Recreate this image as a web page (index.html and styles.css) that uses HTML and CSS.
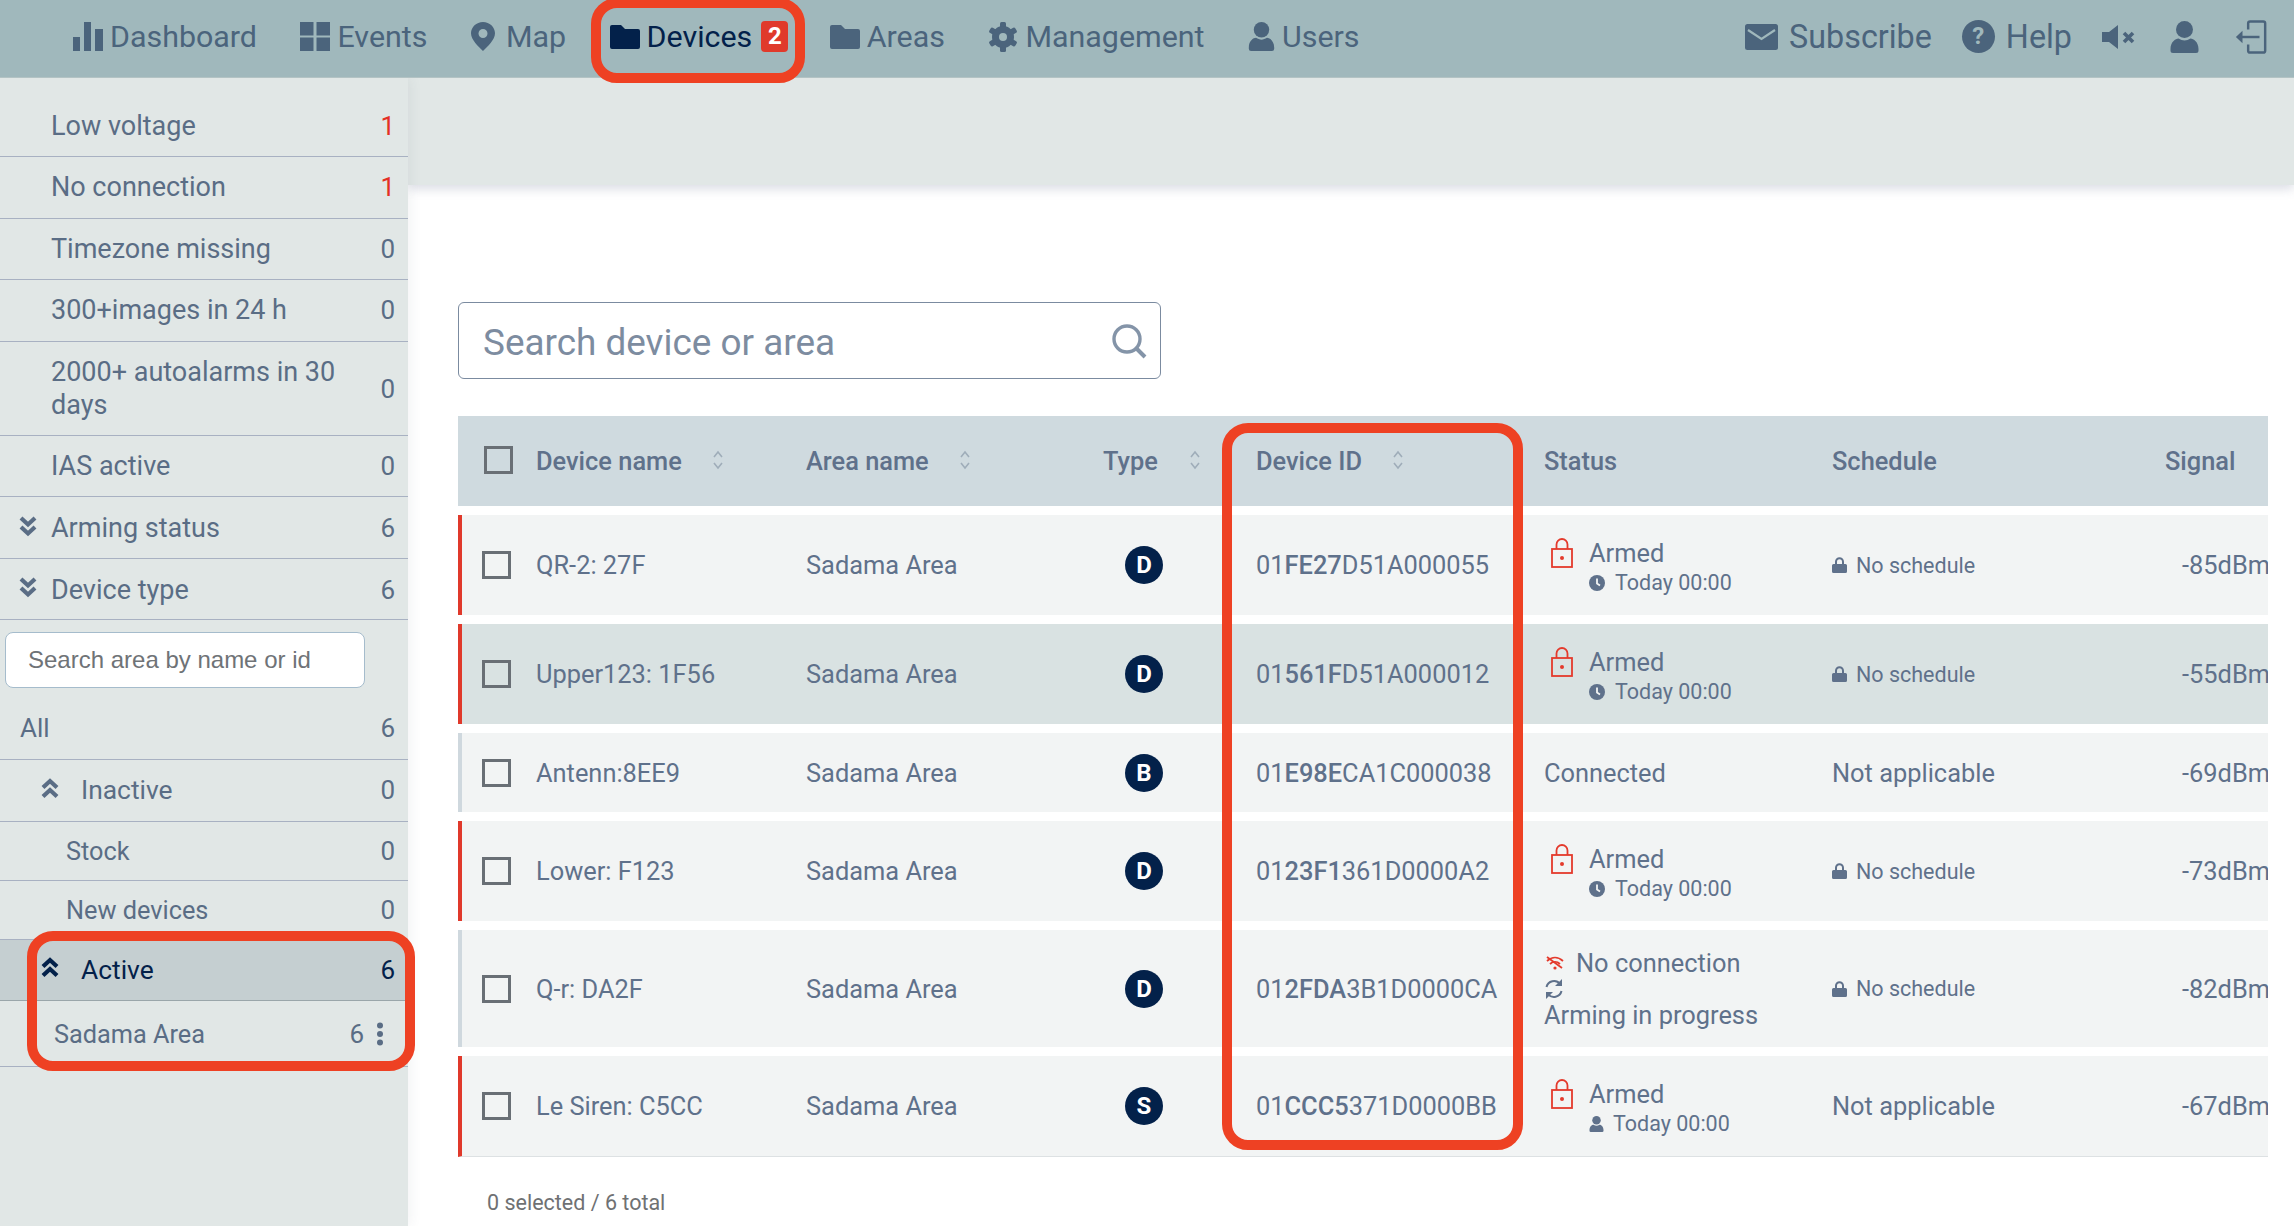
FILE: index.html
```html
<!DOCTYPE html>
<html lang="en">
<head>
<meta charset="utf-8">
<title>Devices</title>
<link rel="stylesheet" href="styles.css">
</head>
<body>
<svg class="defs" width="0" height="0" aria-hidden="true">
  <symbol id="i-folder" viewBox="0 0 30 24"><path d="M2 0h9l4 4h13a2 2 0 0 1 2 2v16a2 2 0 0 1-2 2H2a2 2 0 0 1-2-2V2a2 2 0 0 1 2-2z"/></symbol>
  <symbol id="i-user" viewBox="0 0 28 32"><circle cx="14" cy="8.5" r="8.5"/><path d="M0 28c0-7 5-10.500 8-10.500 2 1.300 4 2 6 2s4-.7 6-2c3 0 8 3.500 8 10.500v1.500a2.500 2.500 0 0 1-2.500 2.500h-23A2.500 2.500 0 0 1 0 29.500z"/></symbol>
  <symbol id="i-lock-red" viewBox="0 0 22 30"><g fill="none" stroke="#e43a2c" stroke-width="1.800"><rect x="1" y="11" width="20" height="18"/><path d="M5.500 11V6.500a5.500 5.500 0 0 1 11 0V11"/></g><circle cx="11" cy="20" r="2" fill="#e43a2c"/></symbol>
  <symbol id="i-lock" viewBox="0 0 15 16"><path fill="#5f718b" d="M3 7V4.800a4.500 4.500 0 0 1 9 0V7h1.500A1.500 1.500 0 0 1 15 8.500v6a1.500 1.500 0 0 1-1.500 1.500h-12A1.500 1.500 0 0 1 0 14.500v-6A1.500 1.500 0 0 1 1.500 7zm2 0h5V4.800a2.500 2.500 0 0 0-5 0z"/></symbol>
  <symbol id="i-clock" viewBox="0 0 16 16"><circle cx="8" cy="8" r="8" fill="#5f718b"/><path d="M8 3.500V8.500l3 2" fill="none" stroke="#f2f4f4" stroke-width="1.800"/></symbol>
  <symbol id="i-sort" viewBox="0 0 10 20"><path d="M1 7l4-5 4 5M1 13l4 5 4-5" fill="none" stroke="#9fadb9" stroke-width="1.600"/></symbol>
  <symbol id="i-chev-down" viewBox="0 0 18 21"><path d="M2 2l7 6.500 7-6.500M2 11l7 6.500 7-6.500" fill="none" stroke="currentColor" stroke-width="4.200"/></symbol>
  <symbol id="i-chev-up" viewBox="0 0 18 21"><path d="M2 9.500l7-6.500 7 6.500M2 18.500l7-6.500 7 6.500" fill="none" stroke="currentColor" stroke-width="4.200"/></symbol>
</svg>

<nav class="topnav">
  <div class="nav-group">
    <a class="nav-item">
      <svg class="ico ico-bars" viewBox="0 0 30 29"><rect x="0" y="15" width="7" height="14"/><rect x="11" y="0" width="7" height="29"/><rect x="22" y="7" width="8" height="22"/></svg>
      <span>Dashboard</span>
    </a>
    <a class="nav-item">
      <svg class="ico ico-grid" viewBox="0 0 30 29"><rect width="13.500" height="13.500"/><rect x="16.500" width="13.500" height="13.500"/><rect y="15.500" width="13.500" height="13.500"/><rect x="16.500" y="15.500" width="13.500" height="13.500"/></svg>
      <span>Events</span>
    </a>
    <a class="nav-item">
      <svg class="ico ico-pin" viewBox="0 0 24 29"><path fill-rule="evenodd" d="M12 0c6.600 0 12 5 12 11.300 0 6.500-7.500 13.500-12 17.700C7.500 24.800 0 17.800 0 11.300 0 5 5.400 0 12 0zm0 7a4.500 4.500 0 1 0 0 9 4.500 4.500 0 0 0 0-9z"/></svg>
      <span>Map</span>
    </a>
    <a class="nav-item nav-active">
      <svg class="ico ico-folder"><use href="#i-folder"/></svg>
      <span>Devices</span>
      <span class="badge">2</span>
    </a>
    <a class="nav-item">
      <svg class="ico ico-folder"><use href="#i-folder"/></svg>
      <span>Areas</span>
    </a>
    <a class="nav-item">
      <svg class="ico ico-gear" viewBox="0 0 30 30">
        <g><rect x="12" y="0" width="6" height="30" rx="1.500"/><rect x="12" y="0" width="6" height="30" rx="1.500" transform="rotate(60 15 15)"/><rect x="12" y="0" width="6" height="30" rx="1.500" transform="rotate(120 15 15)"/></g>
        <circle cx="15" cy="15" r="7.500" fill="none" stroke="currentColor" stroke-width="7"/>
        <circle cx="15" cy="15" r="4" fill="#a0b8bc"/>
      </svg>
      <span>Management</span>
    </a>
    <a class="nav-item">
      <svg class="ico ico-user"><use href="#i-user"/></svg>
      <span>Users</span>
    </a>
  </div>
  <div class="nav-group nav-right">
    <a class="nav-item">
      <svg class="ico ico-mail" viewBox="0 0 33 26"><rect width="33" height="26" rx="2.500"/><path d="M3 6l13.500 9L30 6" fill="none" stroke="#a0b8bc" stroke-width="2.200"/></svg>
      <span>Subscribe</span>
    </a>
    <a class="nav-item">
      <span class="help-ico">?</span>
      <span>Help</span>
    </a>
    <a class="nav-item">
      <svg class="ico ico-sound" viewBox="0 0 33 24"><path d="M0 7h7l9-7v24l-9-7H0z"/><path d="M22 8l9 9M31 8l-9 9" stroke="currentColor" stroke-width="3.600" fill="none"/></svg>
    </a>
    <a class="nav-item">
      <svg class="ico ico-user2"><use href="#i-user"/></svg>
    </a>
    <a class="nav-item">
      <svg class="ico ico-logout" viewBox="0 0 32 36"><path d="M13 10V3.500A2 2 0 0 1 15 1.500h14a2 2 0 0 1 2 2v29a2 2 0 0 1-2 2H15a2 2 0 0 1-2-2V26" fill="none" stroke="currentColor" stroke-width="2.600"/><path d="M25 18H4" stroke="currentColor" stroke-width="2.600"/><path d="M0 18l7-6.500v13z"/></svg>
    </a>
  </div>
</nav>

<div class="layout">
  <aside class="sidebar">
    <div class="side-row h-std"><span class="lbl">Low voltage</span><span class="cnt cnt-red">1</span></div>
    <div class="side-row h-std"><span class="lbl">No connection</span><span class="cnt cnt-red">1</span></div>
    <div class="side-row h-std"><span class="lbl">Timezone missing</span><span class="cnt">0</span></div>
    <div class="side-row h-std"><span class="lbl">300+images in 24 h</span><span class="cnt">0</span></div>
    <div class="side-row h-tall"><span class="lbl lbl-wrap">2000+ autoalarms in 30 days</span><span class="cnt">0</span></div>
    <div class="side-row h-std"><span class="lbl">IAS active</span><span class="cnt">0</span></div>
    <div class="side-row h-std chev-row"><svg class="chev"><use href="#i-chev-down"/></svg><span class="lbl">Arming status</span><span class="cnt">6</span></div>
    <div class="side-row h-std chev-row"><svg class="chev"><use href="#i-chev-down"/></svg><span class="lbl">Device type</span><span class="cnt">6</span></div>
    <div class="area-search"><input class="area-input" placeholder="Search area by name or id"></div>
    <div class="side-row row-all"><span class="lbl">All</span><span class="cnt">6</span></div>
    <div class="side-row h-std sub-head"><svg class="chev"><use href="#i-chev-up"/></svg><span class="lbl">Inactive</span><span class="cnt">0</span></div>
    <div class="side-row h-sub sub-item"><span class="lbl">Stock</span><span class="cnt">0</span></div>
    <div class="side-row h-sub sub-item"><span class="lbl">New devices</span><span class="cnt">0</span></div>
    <div class="side-row h-std sub-head row-active"><svg class="chev"><use href="#i-chev-up"/></svg><span class="lbl">Active</span><span class="cnt">6</span></div>
    <div class="side-row area-row">
      <span class="lbl">Sadama Area</span><span class="cnt">6</span>
      <svg class="dots" viewBox="0 0 8 24"><circle cx="4" cy="3.500" r="3"/><circle cx="4" cy="12" r="3"/><circle cx="4" cy="20.500" r="3"/></svg>
    </div>
  </aside>

  <main class="main">
    <div class="subbar"></div>
    <div class="content">
      <div class="device-search">
        <span class="search-text">Search device or area</span>
        <svg class="search-ico" viewBox="0 0 36 36"><circle cx="16" cy="16" r="13" fill="none" stroke="#8494a8" stroke-width="3.400"/><path d="M25 25l9 9" stroke="#8494a8" stroke-width="4"/></svg>
      </div>

      <div class="tbl">
        <div class="tr thead">
          <div class="cell cell-check"><span class="cb cb-head"></span></div>
          <div class="cell">Device name<svg class="sort sort-name"><use href="#i-sort"/></svg></div>
          <div class="cell">Area name<svg class="sort sort-area"><use href="#i-sort"/></svg></div>
          <div class="cell">Type<svg class="sort sort-type"><use href="#i-sort"/></svg></div>
          <div class="cell">Device ID<svg class="sort sort-id"><use href="#i-sort"/></svg></div>
          <div class="cell">Status</div>
          <div class="cell">Schedule</div>
          <div class="cell">Signal</div>
        </div>

        <div class="tr row alarm">
          <div class="cell cell-check"><span class="cb"></span></div>
          <div class="cell">QR-2: 27F</div>
          <div class="cell">Sadama Area</div>
          <div class="cell"><span class="type">D</span></div>
          <div class="cell">01<b>FE27</b>D51A000055</div>
          <div class="cell armed">
            <svg class="lock-red"><use href="#i-lock-red"/></svg>
            <div class="armed-text"><div class="armed-title">Armed</div><div class="armed-sub"><svg class="sub-ico"><use href="#i-clock"/></svg>Today 00:00</div></div>
          </div>
          <div class="cell sched"><svg class="sched-lock"><use href="#i-lock"/></svg>No schedule</div>
          <div class="cell signal">-85dBm</div>
        </div>

        <div class="tr row alarm row-dark">
          <div class="cell cell-check"><span class="cb"></span></div>
          <div class="cell">Upper123: 1F56</div>
          <div class="cell">Sadama Area</div>
          <div class="cell"><span class="type">D</span></div>
          <div class="cell">01<b>561F</b>D51A000012</div>
          <div class="cell armed">
            <svg class="lock-red"><use href="#i-lock-red"/></svg>
            <div class="armed-text"><div class="armed-title">Armed</div><div class="armed-sub"><svg class="sub-ico"><use href="#i-clock"/></svg>Today 00:00</div></div>
          </div>
          <div class="cell sched"><svg class="sched-lock"><use href="#i-lock"/></svg>No schedule</div>
          <div class="cell signal">-55dBm</div>
        </div>

        <div class="tr row row-short">
          <div class="cell cell-check"><span class="cb"></span></div>
          <div class="cell">Antenn:8EE9</div>
          <div class="cell">Sadama Area</div>
          <div class="cell"><span class="type">B</span></div>
          <div class="cell">01<b>E98E</b>CA1C000038</div>
          <div class="cell">Connected</div>
          <div class="cell">Not applicable</div>
          <div class="cell signal">-69dBm</div>
        </div>

        <div class="tr row alarm">
          <div class="cell cell-check"><span class="cb"></span></div>
          <div class="cell">Lower: F123</div>
          <div class="cell">Sadama Area</div>
          <div class="cell"><span class="type">D</span></div>
          <div class="cell">01<b>23F1</b>361D0000A2</div>
          <div class="cell armed">
            <svg class="lock-red"><use href="#i-lock-red"/></svg>
            <div class="armed-text"><div class="armed-title">Armed</div><div class="armed-sub"><svg class="sub-ico"><use href="#i-clock"/></svg>Today 00:00</div></div>
          </div>
          <div class="cell sched"><svg class="sched-lock"><use href="#i-lock"/></svg>No schedule</div>
          <div class="cell signal">-73dBm</div>
        </div>

        <div class="tr row row-tall">
          <div class="cell cell-check"><span class="cb"></span></div>
          <div class="cell">Q-r: DA2F</div>
          <div class="cell">Sadama Area</div>
          <div class="cell"><span class="type">D</span></div>
          <div class="cell">01<b>2FDA</b>3B1D0000CA</div>
          <div class="cell progress">
            <div class="noconn">
              <svg class="wifi-off" viewBox="0 0 18 14"><g fill="none" stroke="#e43a2c" stroke-width="1.800"><path d="M1 5c5-4.500 11-4.500 16 0M4 8c3-2.800 7-2.800 10 0"/><path d="M1 1l15 11"/></g><circle cx="9" cy="12" r="1.600" fill="#e43a2c"/></svg>
              <span>No connection</span>
            </div>
            <svg class="sync" viewBox="0 0 20 20"><g fill="none" stroke="#5f718b" stroke-width="2"><path d="M2.500 8A7.700 7.700 0 0 1 16 5"/><path d="M17.500 12A7.700 7.700 0 0 1 4 15"/></g><path fill="#5f718b" d="M18 0v7h-7zM2 20v-7h7z"/></svg>
            <div class="progress-text">Arming in progress</div>
          </div>
          <div class="cell sched"><svg class="sched-lock"><use href="#i-lock"/></svg>No schedule</div>
          <div class="cell signal">-82dBm</div>
        </div>

        <div class="tr row alarm row-last">
          <div class="cell cell-check"><span class="cb"></span></div>
          <div class="cell">Le Siren: C5CC</div>
          <div class="cell">Sadama Area</div>
          <div class="cell"><span class="type">S</span></div>
          <div class="cell">01<b>CCC5</b>371D0000BB</div>
          <div class="cell armed">
            <svg class="lock-red"><use href="#i-lock-red"/></svg>
            <div class="armed-text"><div class="armed-title">Armed</div><div class="armed-sub"><svg class="sub-ico sub-user"><use href="#i-user"/></svg>Today 00:00</div></div>
          </div>
          <div class="cell">Not applicable</div>
          <div class="cell signal">-67dBm</div>
        </div>
      </div>

      <div class="total">0 selected / 6 total</div>
    </div>
  </main>
</div>

<div class="mark mark-devices"></div>
<div class="mark mark-active"></div>
<div class="mark mark-id"></div>
</body>
</html>
```

FILE: styles.css
```css
* { box-sizing: border-box; }
html, body { margin: 0; padding: 0; height: 100%; }
body {
  position: relative;
  width: 2294px;
  height: 1226px;
  overflow: hidden;
  background: #fff;
  font-family: Roboto, "Liberation Sans", sans-serif;
  color: #5f718b;
}
.defs { position: absolute; }

/* Top navigation */
.topnav {
  height: 78px;
  background: #a0b8bc;
  border-bottom: 1px solid #b3c3c4;
  display: flex;
  justify-content: space-between;
  align-items: flex-start;
  padding: 0 27px 0 73px;
  position: relative;
  z-index: 3;
  color: #4b647c;
  font-size: 30.400px;
}
.nav-group { display: flex; gap: 43.500px; height: 77px; align-items: center; padding-bottom: 4px; }
.nav-right { gap: 30px; font-size: 32.300px; }
.nav-item { display: flex; align-items: center; gap: 7px; white-space: nowrap; }
.nav-right .nav-item { gap: 11px; }
.nav-active { color: #03214a; margin-right: -2px; }
.ico { fill: currentColor; flex: none; display: block; }
.ico-bars, .ico-grid { width: 30px; height: 29px; }
.ico-pin { width: 24px; height: 29px; margin-right: 4px; }
.ico-folder { width: 30px; height: 24px; }
.ico-gear { width: 30px; height: 30px; }
.ico-user { width: 27px; height: 29px; }
.ico-user2 { width: 29px; height: 32px; margin-left: 5px; }
.ico-mail { width: 33px; height: 26px; }
.ico-sound { width: 33px; height: 24px; }
.ico-logout { width: 32px; height: 34px; margin-left: 6px; }
.help-ico {
  width: 33px;
  height: 33px;
  border-radius: 50%;
  background: #4b647c;
  color: #a0b8bc;
  font-size: 24px;
  font-weight: 700;
  line-height: 33px;
  text-align: center;
}
.badge {
  width: 27px;
  height: 31px;
  margin-left: 2px;
  border-radius: 4px;
  background: #e03a2b;
  color: #fff;
  font-size: 24px;
  font-weight: 700;
  line-height: 31px;
  text-align: center;
}

/* Page layout */
.layout { display: flex; height: 1148px; }

/* Sidebar */
.sidebar {
  width: 408px;
  flex: none;
  background: #e1e7e6;
  padding-top: 17.500px;
  font-size: 25.300px;
  color: #5a6d85;
  box-shadow: 2px 0 12px rgba(60, 70, 90, .07);
  position: relative;
  z-index: 2;
}
.side-row {
  display: flex;
  align-items: center;
  border-bottom: 1px solid #a8b1c2;
  padding: 0 13px 0 51px;
}
.h-std { height: 61.500px; font-size: 27px; }
.h-tall { height: 94px; font-size: 27px; padding-top: 2px; }
.h-sub { height: 59px; padding-top: 1px; }
.lbl { flex: 1; }
.lbl-wrap { padding-right: 40px; line-height: 33px; }
.cnt { flex: none; font-size: 26px; }
.cnt-red { color: #e43025; }
.chev-row { padding-left: 19px; padding-top: 2px; }
.chev { width: 18px; height: 21px; flex: none; margin-right: 14px; margin-top: -4px; }
.area-search { padding: 12px 0 0 5px; }
.area-input {
  display: block;
  width: 360px;
  height: 56px;
  border: 1px solid #a5bccc;
  border-radius: 8px;
  background: #fff;
  padding: 0 22px;
  font-family: "Liberation Sans", Arial, sans-serif;
  font-size: 24px;
  outline: none;
}
.area-input::placeholder { color: #6f7377; opacity: 1; }
.row-all { height: 72px; padding: 9px 13px 0 20px; font-size: 26px; }
.sub-head { padding-left: 41px; font-size: 26.400px; }
.sub-head .chev { margin-right: 22px; }
.sub-item { padding-left: 66px; }
.row-active { background: #c5cfd1; color: #03214a; border-bottom-color: #9aa6aa; }
.area-row { height: 66px; padding: 1px 13px 0 54px; }
.area-row .cnt { margin-right: 12px; }
.dots { width: 8px; height: 24px; fill: #5a6d85; margin-right: 11px; }

/* Main column */
.main { flex: 1; min-width: 0; }
.subbar {
  height: 107px;
  background: #e1e7e6;
  box-shadow: 0 4px 10px rgba(90, 100, 135, .22);
}
.content { padding: 117px 26px 0 50px; }
.device-search {
  width: 703px;
  height: 77px;
  border: 1px solid #7b8ba0;
  border-radius: 6px;
  display: flex;
  align-items: center;
  justify-content: space-between;
  padding: 0 13px 0 24px;
}
.search-text { font-size: 36.900px; color: #7d8ca0; padding-top: 3px; }
.search-ico { width: 36px; height: 36px; }

/* Table */
.tbl {
  margin-top: 37px;
  display: flex;
  flex-direction: column;
  gap: 9px;
  font-size: 25.400px;
  overflow: hidden;
}
.tr {
  display: grid;
  grid-template-columns: 74px 270px 297px 153px 288px 288px 333px 103px;
  border-left: 4px solid transparent;
  height: 100px;
  white-space: nowrap;
}
.thead {
  height: 90px;
  background: #cfdadf;
  border-left-color: #cfdadf;
  font-weight: 500;
}
.cell { display: flex; align-items: center; min-width: 0; }
.row { background: #f2f4f4; border-left-color: #cfd8de; }
.row .cell b { font-weight: 500; }
.alarm { border-left-color: #e0392b; }
.row-dark { background: #d9e2e2; }
.row-short { height: 79px; }
.row-tall { height: 117px; }
.row-last { height: 101px; border-bottom: 1px solid #dde1e3; }
.cell-check { padding-left: 20px; }
.cb { width: 29px; height: 28px; border: 3px solid #696f75; display: block; background: transparent; }
.cb-head { margin-left: 2px; margin-top: -2px; }
.sort { width: 10px; height: 20px; flex: none; margin-top: -2px; }
.sort-name { margin-left: 31px; }
.sort-area { margin-left: 31px; }
.sort-type { margin-left: 32px; }
.sort-id { margin-left: 31px; }
.type {
  width: 38px;
  height: 38px;
  margin-left: 22px;
  border-radius: 50%;
  background: #03214a;
  color: #fff;
  font-size: 24px;
  font-weight: 700;
  line-height: 38px;
  text-align: center;
}
.armed { padding-left: 7px; gap: 16px; }
.lock-red { width: 22px; height: 30px; margin-top: -24px; flex: none; }
.armed-text { margin-top: 5px; }
.armed-title { line-height: 30px; }
.armed-sub { display: flex; align-items: center; font-size: 21.500px; line-height: 30px; }
.sub-ico { width: 16px; height: 16px; margin-right: 10px; flex: none; }
.sub-user { width: 15px; height: 16px; fill: #5f718b; margin-right: 9px; }
.sched { font-size: 21.500px; }
.sched-lock { width: 15px; height: 16px; margin-right: 9px; flex: none; }
.signal { padding-left: 17px; }
.progress { flex-direction: column; align-items: flex-start; justify-content: center; }
.noconn { display: flex; align-items: center; line-height: 26px; padding-left: 2px; }
.wifi-off { width: 18px; height: 14px; margin-right: 12px; }
.sync { width: 20px; height: 20px; margin: 3px 0; }
.progress-text { line-height: 26px; }
.total { margin: 33px 0 0 29px; font-size: 21.500px; color: #6f7173; }

/* Red annotation frames laid over the screenshot */
.mark {
  position: absolute;
  border: 10px solid #ee4123;
  border-radius: 26px;
  z-index: 5;
  pointer-events: none;
}
.mark-devices { left: 591px; top: -2px; width: 214px; height: 85px; }
.mark-active { left: 27px; top: 931px; width: 388px; height: 140px; }
.mark-id { left: 1222px; top: 423px; width: 301px; height: 727px; }
```
